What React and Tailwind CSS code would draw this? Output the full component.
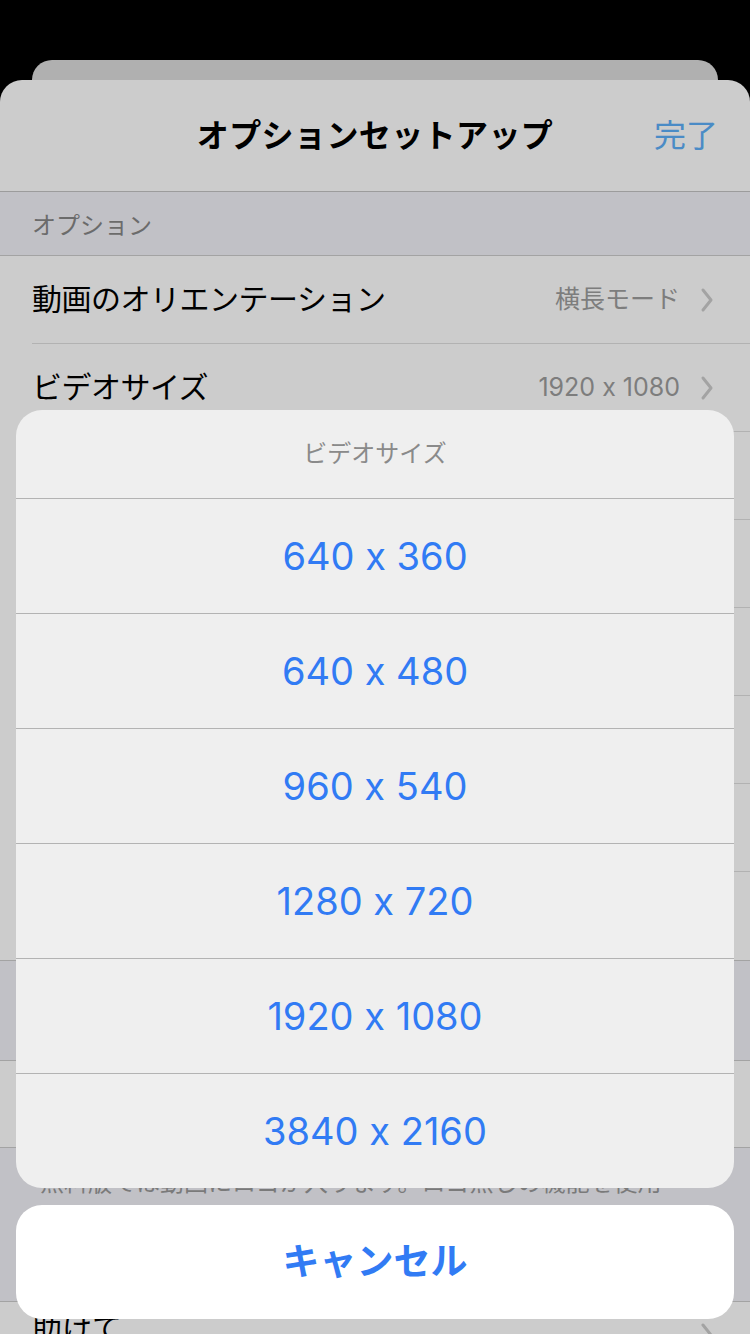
import React from 'react'

const sizes = ['640 x 360', '640 x 480', '960 x 540', '1280 x 720', '1920 x 1080', '3840 x 2160']

function Chevron() {
  return (
    <svg width="14" height="26" viewBox="0 0 14 26" fill="none" className="shrink-0">
      <path d="M3 3l8 10-8 10" stroke="#a3a3a3" strokeWidth="3" strokeLinecap="round" strokeLinejoin="round" />
    </svg>
  )
}

function Row({ label, value, last }) {
  return (
    <div className="pl-8">
      <div className={`h-[88px] flex items-center justify-between pr-9 ${last ? '' : 'border-b border-[#b2b2b2]'}`}>
        <p className="text-[30px] text-black tracking-[-0.5px]">{label}</p>
        {value !== undefined && (
          <div className="flex items-center gap-5">
            <p className="text-[25px] text-[#7d7d7d]">{value}</p>
            <Chevron />
          </div>
        )}
      </div>
    </div>
  )
}

export default function App() {
  return (
    <div
      className="relative w-[750px] h-[1334px] overflow-hidden bg-black [font-feature-settings:'calt'_0]"
      style={{ fontFamily: "Inter, 'Noto Sans CJK JP', sans-serif" }}
    >
      <div className="pt-[60px]">
        <div className="mx-8 h-5 rounded-t-[20px] bg-[#b0b0b0]" />

        {/* main sheet */}
        <div className="rounded-t-[22px] bg-[#cccccc]">
          <div className="h-[112px] grid grid-cols-[1fr_auto_1fr] items-center border-b border-[#9c9c9c]">
            <div />
            <h1 className="text-[32px] font-bold text-black tracking-[0.4px]">オプションセットアップ</h1>
            <p className="justify-self-end pr-8 text-[32px] text-[#4a8bc6]">完了</p>
          </div>

          <div className="h-16 bg-[#c1c1c6] px-8 flex items-center border-b border-[#a3a3a3]">
            <p className="text-[24px] text-[#6b6b6b] pt-1">オプション</p>
          </div>

          <Row label="動画のオリエンテーション" value="横長モード" />
          <Row label="ビデオサイズ" value="1920 x 1080" />
          <Row label="フレームレート" value="30 fps" />
          <Row label="ビットレート" value="標準" />
          <Row label="オーディオ" value="オン" />
          <Row label="保存先" value="カメラロール" />
          <Row label="ファイル形式" value="MP4" />
          <Row label="画質" value="高" last />

          <div className="h-[101px] bg-[#c1c1c6] border-y border-[#a3a3a3]" />
          <div className="h-[86px] px-8 flex items-center">
            <p className="text-[30px] text-black">ロゴを削除</p>
          </div>
          <div className="h-[155px] bg-[#c1c1c6] border-y border-[#a3a3a3] pl-10 pr-[70px] pt-[18px]">
            <p className="text-[24px] leading-[34px] text-[#7a7a7a]">
              無料版では動画にロゴが入ります。ロゴ無しの機能を使用します。
            </p>
          </div>
          <div className="h-[88px] pl-8 pr-9 pt-1 flex items-start justify-between">
            <p className="text-[30px] text-black">助けて</p>
            <div className="pt-4">
              <Chevron />
            </div>
          </div>
        </div>
      </div>

      {/* action sheet */}
      <div className="absolute top-[410px] left-4 right-4 flex flex-col gap-[17px]">
        <div className="rounded-[26px] bg-[#efefef] overflow-hidden">
          <div className="h-[88px] flex items-center justify-center">
            <p className="text-[24px] text-[#8a8a8a]">ビデオサイズ</p>
          </div>
          {sizes.map((s) => (
            <div key={s} className="h-[115px] border-t border-[#b3b3b3] flex items-center justify-center">
              <p className="text-[38px] text-[#317bf4]">{s}</p>
            </div>
          ))}
        </div>
        <div className="h-[114px] rounded-[26px] bg-white flex items-center justify-center">
          <p className="text-[37px] font-bold text-[#317bf4]">キャンセル</p>
        </div>
      </div>
    </div>
  )
}
